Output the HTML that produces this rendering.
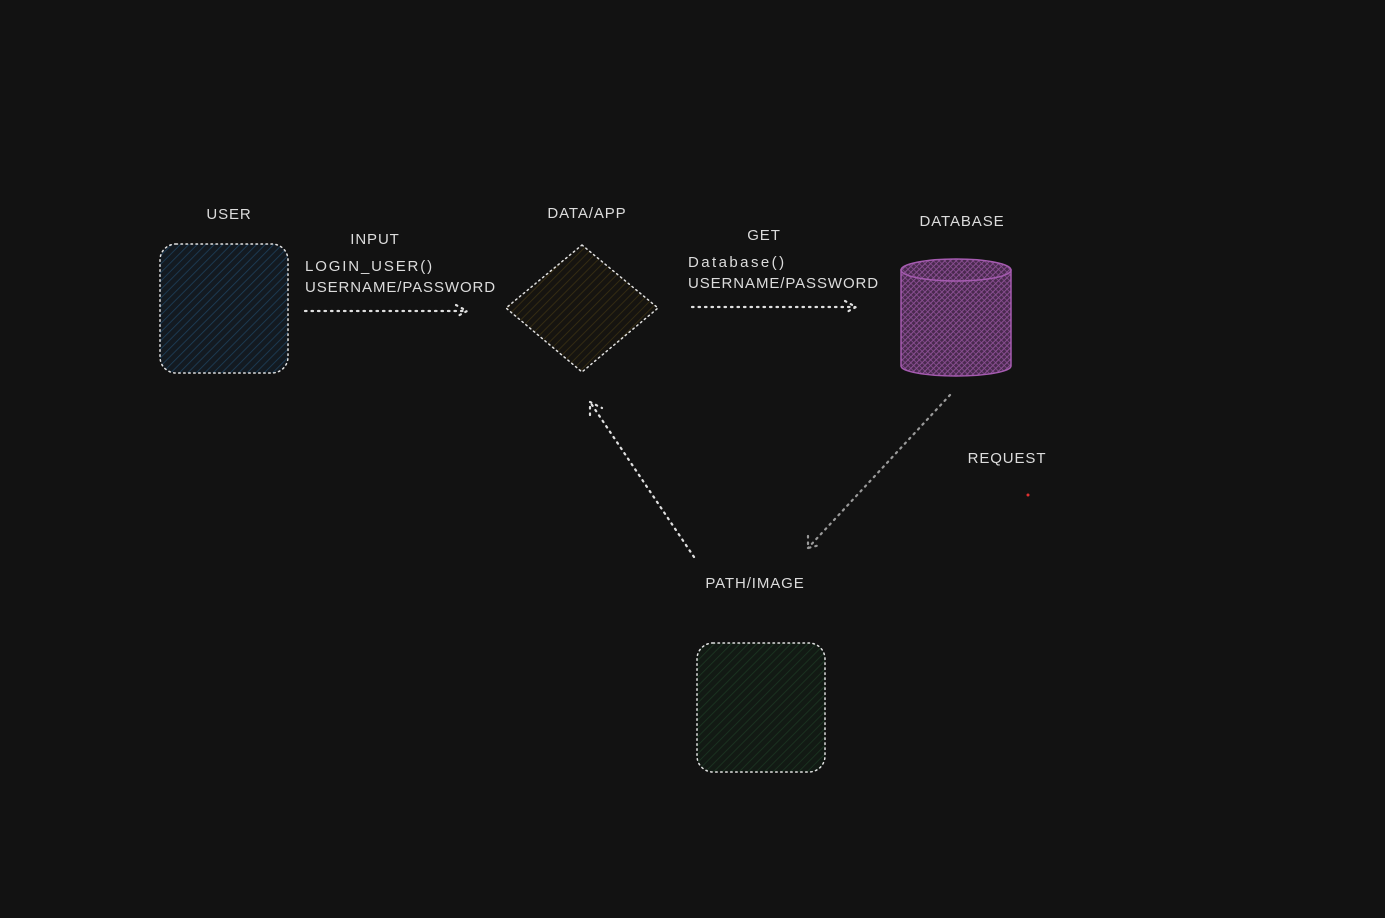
<!DOCTYPE html>
<html><head><style>
html,body{margin:0;padding:0;background:#121212;}
svg{display:block}
text{font-family:"Liberation Sans",sans-serif;font-size:15px;fill:#dcdcdc;letter-spacing:0.9px;}
</style></head><body>
<svg width="1385" height="918" viewBox="0 0 1385 918">
<defs>
<pattern id="hb" width="6" height="6" patternUnits="userSpaceOnUse" patternTransform="rotate(45)"><rect width="6" height="6" fill="#131a21"/><line x1="0" y1="0" x2="0" y2="6" stroke="#1d3f5a" stroke-width="1.6"/></pattern>
<pattern id="hy" width="6" height="6" patternUnits="userSpaceOnUse" patternTransform="rotate(45)"><rect width="6" height="6" fill="#161410"/><line x1="0" y1="0" x2="0" y2="6" stroke="#3a3012" stroke-width="1.6"/></pattern>
<pattern id="hg" width="6" height="6" patternUnits="userSpaceOnUse" patternTransform="rotate(45)"><rect width="6" height="6" fill="#121a14"/><line x1="0" y1="0" x2="0" y2="6" stroke="#1c3622" stroke-width="1.6"/></pattern>
<pattern id="hp" width="4" height="4" patternUnits="userSpaceOnUse" patternTransform="rotate(45)"><rect width="4" height="4" fill="#4a2a4f"/><line x1="0" y1="0" x2="0" y2="4" stroke="#8b4f93" stroke-width="2"/><line x1="0" y1="0" x2="4" y2="0" stroke="#8b4f93" stroke-width="1.5"/></pattern>
</defs>
<g stroke="#e0e0e0" stroke-width="1.5" stroke-dasharray="1.5 3.5" stroke-linecap="round">
<rect x="160" y="244" width="128" height="129" rx="16" fill="url(#hb)"/>
<path d="M582 245 L658 308 L582 372 L506 308 Z" fill="url(#hy)" stroke-linejoin="round"/>
<rect x="697" y="643" width="128" height="129" rx="16" fill="url(#hg)"/>
</g>
<g fill="url(#hp)" stroke="#a55bb0" stroke-width="1.5">
<path d="M901 270 L901 366 A55 10 0 0 0 1011 366 L1011 270 Z"/>
<ellipse cx="956" cy="270" rx="55" ry="11"/>
</g>
<g fill="none" stroke-width="2.2" stroke-dasharray="1.5 5" stroke-linecap="round">
<path d="M305 311 L466 311" stroke="#e0e0e0"/>
<path d="M456 305 L467 311 L456 317" stroke="#e0e0e0"/>
<path d="M692 307 L855 307" stroke="#e0e0e0"/>
<path d="M845 301 L856 307 L845 313" stroke="#e0e0e0"/>
<path d="M694 557 L590 402" stroke="#e0e0e0"/>
<path d="M590 415 L590 402 L602 408" stroke="#e0e0e0"/>
<path d="M950 395 L808 548" stroke="#9a9a9a"/>
<path d="M808 536 L808 548 L820 545" stroke="#9a9a9a"/>
</g>
<circle cx="1028" cy="495" r="1.5" fill="#e03030"/>
<text x="229" y="219" text-anchor="middle">USER</text>
<text x="375" y="244" text-anchor="middle">INPUT</text>
<text x="305" y="271" textLength="128">LOGIN_USER()</text>
<text x="305" y="292" textLength="191">USERNAME/PASSWORD</text>
<text x="587" y="218" text-anchor="middle">DATA/APP</text>
<text x="764" y="240" text-anchor="middle">GET</text>
<text x="688" y="267" textLength="97">Database()</text>
<text x="688" y="288" textLength="191">USERNAME/PASSWORD</text>
<text x="962" y="226" text-anchor="middle">DATABASE</text>
<text x="1007" y="463" text-anchor="middle">REQUEST</text>
<text x="755" y="588" text-anchor="middle">PATH/IMAGE</text>
</svg>
</body></html>
